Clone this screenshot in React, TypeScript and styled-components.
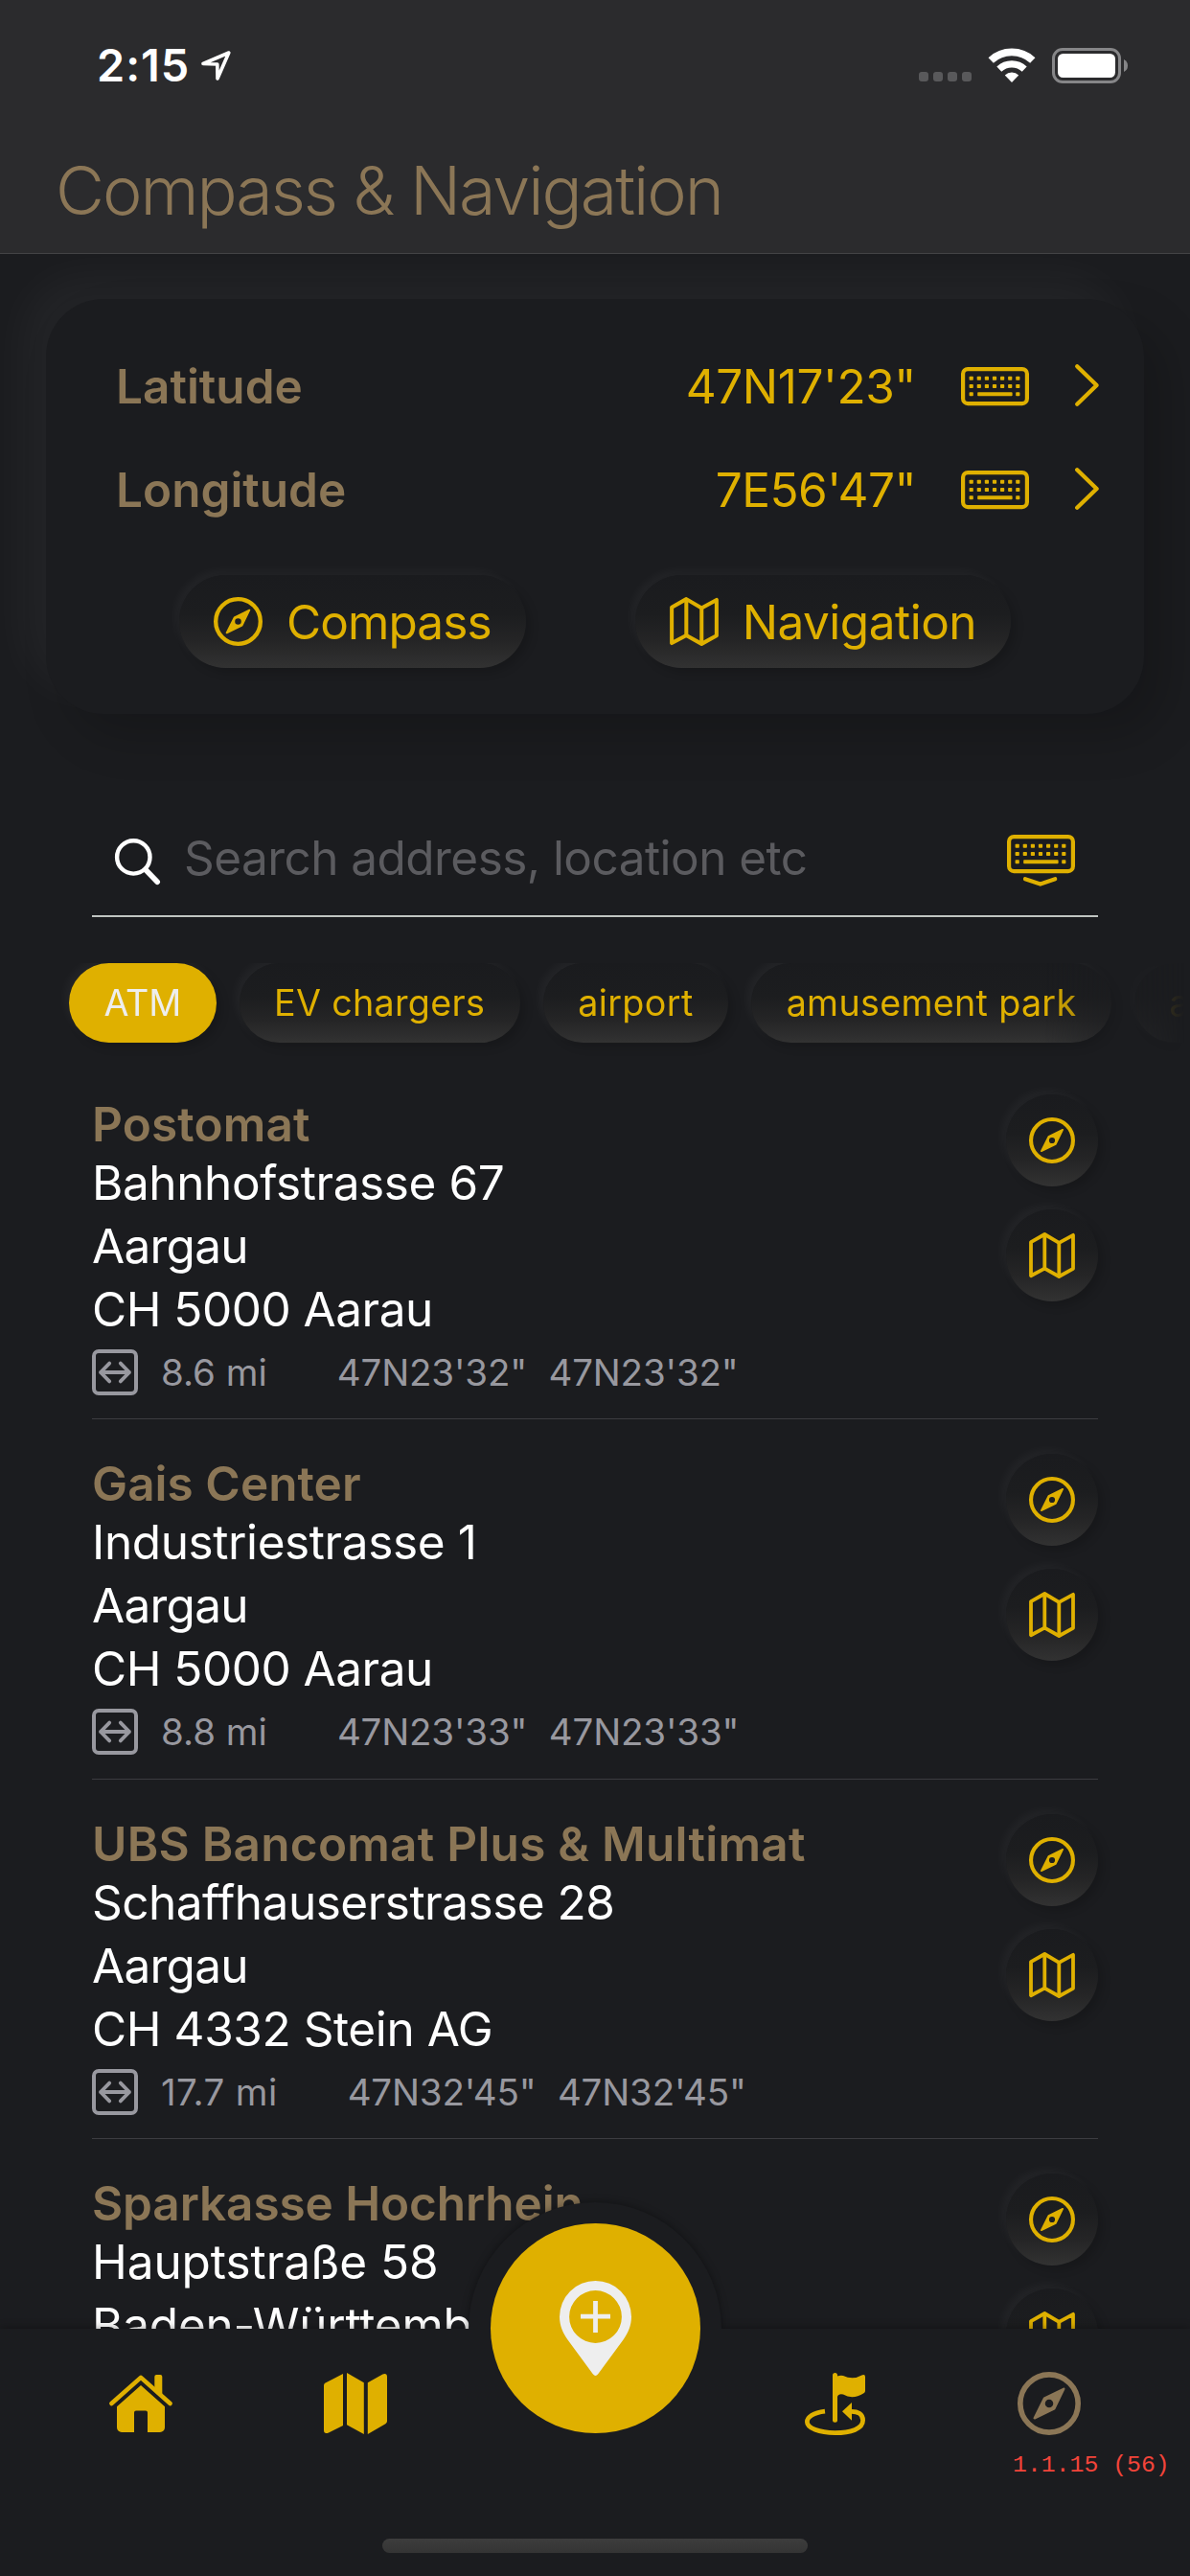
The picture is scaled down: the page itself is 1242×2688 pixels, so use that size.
import React from "react";
import styled, { createGlobalStyle, css } from "styled-components";

const color = {
  bg: "#1b1c1f",
  header: "#2b2b2d",
  gold: "#dfb000",
  bronze: "#8b7656",
  white: "#ffffff",
  muted: "#98989f",
  placeholder: "#5b5b5f",
  offWhite: "#eeeeee",
};

const GlobalStyle = createGlobalStyle`
  html, body { margin: 0; padding: 0; background: ${color.bg}; }
  * { box-sizing: border-box; }
  body { font-family: Inter, Roboto, "Liberation Sans", sans-serif; }
  svg { display: block; flex: none; overflow: visible; }
`;

const raised = css`
  background: linear-gradient(180deg, #1a1b1e 0%, #1c1d1f 42%, #252526 72%, #323232 100%);
  box-shadow: -5px -5px 10px rgba(255, 255, 255, 0.035), 5px 5px 10px rgba(0, 0, 0, 0.16);
`;

const Screen = styled.div`
  width: 1242px;
  height: 2688px;
  display: flex;
  flex-direction: column;
  overflow: hidden;
  background: ${color.bg};
`;

const Header = styled.header`
  flex: none;
  height: 265px;
  background: ${color.header};
  border-bottom: 1px solid #434345;
`;

const StatusBar = styled.div`
  display: flex;
  align-items: center;
  height: 136px;
  padding: 0 65px 0 101px;
`;

const Clock = styled.span`
  font-size: 46.8px;
  font-weight: 600;
  letter-spacing: 0.98px;
  line-height: 56px;
  color: ${color.white};
  margin-right: 12px;
`;

const StatusIcons = styled.div`
  display: flex;
  align-items: center;
  margin-left: auto;
`;

const SignalDots = styled.div`
  display: flex;
  gap: 5px;
  margin: 24px 18px 0 0;
`;

const SignalDot = styled.span`
  width: 10px;
  height: 10px;
  border-radius: 3px;
  background: #59595b;
`;

const BatteryBox = styled.span`
  margin-left: 18px;
`;

const Title = styled.h1`
  margin: 0;
  padding-left: 58px;
  font-size: 70px;
  font-weight: 310;
  letter-spacing: -2.02px;
  line-height: 126px;
  white-space: nowrap;
  color: ${color.bronze};
`;

const Main = styled.main`
  flex: 1;
  min-height: 0;
  overflow: hidden;
  display: flex;
  flex-direction: column;
`;

const Card = styled.section`
  flex: none;
  height: 433px;
  margin: 47px 48px 0;
  padding-top: 37px;
  border-radius: 60px;
  background: ${color.bg};
  box-shadow: -24px -24px 48px rgba(255, 255, 255, 0.038), 24px 24px 48px rgba(0, 0, 0, 0.18);
`;

const CoordRow = styled.div`
  display: flex;
  align-items: center;
  height: 108px;
  padding: 0 47px 0 73px;
`;

const Label = styled.span`
  font-size: 49.5px;
  font-weight: 600;
  line-height: 60px;
  color: ${color.bronze};
`;

const Value = styled.span<{ $track: number }>`
  margin: 0 47px 0 auto;
  font-size: 49.5px;
  line-height: 60px;
  letter-spacing: ${(p) => p.$track}px;
  color: ${color.gold};
`;

const ChevronBox = styled.span`
  margin: -2px 0 0 48px;
`;

const Actions = styled.div`
  display: flex;
  justify-content: center;
  gap: 114px;
  margin-top: 35px;
`;

const PillButton = styled.button<{ $track: number }>`
  ${raised}
  display: flex;
  align-items: center;
  gap: 25px;
  height: 97px;
  padding: 0 36px;
  border: 0;
  border-radius: 49px;
  font: 400 49.5px/60px Inter, sans-serif;
  letter-spacing: ${(p) => p.$track}px;
  color: ${color.gold};
`;

const SearchBar = styled.div`
  flex: none;
  display: flex;
  align-items: center;
  height: 122px;
  margin: 90px 96px 0;
  padding: 0 24px;
  border-bottom: 2px solid #bfc4c1;
`;

const Placeholder = styled.span`
  margin: 0 auto 0 25px;
  font-size: 49.5px;
  letter-spacing: -0.55px;
  line-height: 60px;
  color: ${color.placeholder};
`;

const SearchGlyph = styled.span`
  margin-top: 8px;
`;

const DismissGlyph = styled.span`
  margin-top: 6px;
`;

const Chips = styled.div`
  flex: none;
  display: flex;
  gap: 24px;
  height: 101px;
  margin-top: 48px;
  padding: 0 0 18px 72px;
  overflow: hidden;
  mask-image: linear-gradient(90deg, #000 1090px, transparent 1236px);
`;

const Chip = styled.button<{ $active?: boolean; $track: number }>`
  ${raised}
  flex: none;
  height: 83px;
  padding: 0 36.5px 1px;
  border: 0;
  border-radius: 42px;
  font: 400 37.7px/48px Inter, sans-serif;
  letter-spacing: ${(p) => p.$track}px;
  color: ${color.gold};
  ${(p) =>
    p.$active &&
    css`
      background: ${color.gold};
      color: ${color.offWhite};
    `}
`;

const List = styled.div`
  flex: none;
  padding: 0 96px;
`;

const Item = styled.article`
  display: flex;
  justify-content: space-between;
  height: 375.34px;
  padding-top: 36px;
  border-bottom: 1px solid #3c3c40;
`;

const Details = styled.div`
  padding-top: 4px;
  white-space: nowrap;
`;

const Name = styled.h2<{ $track: number }>`
  margin: 0;
  font-size: 49.5px;
  font-weight: 600;
  line-height: 55px;
  letter-spacing: ${(p) => p.$track}px;
  color: ${color.bronze};
`;

const AddressLine = styled.p<{ $track: number }>`
  margin: 0;
  font-size: 49.5px;
  line-height: 66px;
  letter-spacing: ${(p) => p.$track}px;
  color: ${color.white};
`;

const Meta = styled.div`
  display: flex;
  align-items: center;
  height: 66px;
  font-size: 38.5px;
  letter-spacing: -0.17px;
  color: ${color.muted};
`;

const Distance = styled.span<{ $track: number }>`
  margin: 0 73px 0 24px;
  letter-spacing: ${(p) => p.$track}px;
`;

const Coord = styled.span`
  margin-right: 22.5px;
`;

const ItemActions = styled.div`
  display: flex;
  flex-direction: column;
  gap: 24px;
`;

const RoundButton = styled.button`
  ${raised}
  display: grid;
  place-items: center;
  width: 96px;
  height: 96px;
  padding: 0;
  border: 0;
  border-radius: 50%;
  color: ${color.gold};
`;

const TabBar = styled.nav`
  flex: none;
  position: relative;
  height: 258px;
  background: ${color.bg};
  box-shadow: 0 0 9px rgba(0, 0, 0, 0.4);
`;

const Bump = styled.div`
  position: absolute;
  left: 489px;
  top: -132px;
  width: 264px;
  height: 133px;
  border-radius: 132px 132px 0 0;
  background: ${color.bg};
  box-shadow: 0 0 9px rgba(0, 0, 0, 0.4);
  clip-path: inset(-24px -24px 1px -24px);
`;

const AddButton = styled.button`
  position: absolute;
  left: 512px;
  top: -110px;
  display: grid;
  place-items: center;
  width: 219px;
  height: 219px;
  padding: 0;
  border: 0;
  border-radius: 50%;
  background: ${color.gold};
`;

const Tabs = styled.div`
  display: grid;
  grid-template-columns: 224px 223px 278px 223px 224px;
  height: 156px;
  padding: 0 35px;
`;

const Tab = styled.div<{ $current?: boolean }>`
  display: grid;
  place-items: center;
  color: ${(p) => (p.$current ? color.bronze : color.gold)};
`;

const Version = styled.span`
  position: absolute;
  left: 1057px;
  top: 127px;
  font: 24.8px/30px "Liberation Mono", monospace;
  color: #f2443a;
  white-space: pre;
`;

const HomeIndicator = styled.div`
  width: 444px;
  height: 15px;
  margin: 63px auto 0;
  border-radius: 8px;
  background: linear-gradient(180deg, #3d3d3d, #343434);
`;

const CompassIcon = ({ size }: { size: number }) => (
  <svg width={size} height={size} viewBox="0 0 48 48" fill="none">
    <circle cx="24" cy="24" r="21.95" stroke="currentColor" strokeWidth="4.1" />
    <path
      fillRule="evenodd"
      d="M35.1 12.9L20.4 20.1L12.9 35.1L27.8 27.9ZM24 20.9A3.1 3.1 0 1 1 24 27.1A3.1 3.1 0 1 1 24 20.9Z"
      fill="currentColor"
    />
    <path d="M35.1 12.9L20.4 20.1L12.9 35.1L27.8 27.9Z" stroke="currentColor" strokeWidth="1.8" strokeLinejoin="round" />
  </svg>
);

const MapIcon = ({ size }: { size: number }) => (
  <svg width={size} height={size} viewBox="0 0 48 48" fill="none" stroke="currentColor" strokeWidth="3.8" strokeLinejoin="round">
    <path d="M2 10.2L16.3 2L31.3 10.8L46 2.8V37.8L31.3 46L16.3 37.6L2 45.2Z" />
    <path d="M16.3 2V37.6M31.3 10.8V46" />
  </svg>
);

const keyColumns = [10.7, 18.8, 26.9, 35, 43.1, 51.2, 59.3];

const KeyboardIcon = ({ dismiss }: { dismiss?: boolean }) => (
  <svg width="71" height={dismiss ? 54 : 40} viewBox={dismiss ? "0 0 71 54" : "0 0 71 40"} fill="none">
    <rect x="2.1" y="2.1" width="66.8" height="36" rx="5" stroke={color.gold} strokeWidth="4.2" />
    {keyColumns.map((x) => (
      <React.Fragment key={x}>
        <rect x={x - 2.1} y="9.7" width="4.2" height="4" rx="0.8" fill={color.gold} />
        <rect x={x - 2.1} y="18" width="4.2" height="4" rx="0.8" fill={color.gold} />
      </React.Fragment>
    ))}
    <rect x="8.6" y="26.2" width="4.2" height="4" rx="0.8" fill={color.gold} />
    <rect x="17.2" y="26.2" width="36.4" height="4" rx="0.8" fill={color.gold} />
    <rect x="57.2" y="26.2" width="4.2" height="4" rx="0.8" fill={color.gold} />
    {dismiss && (
      <path d="M19 46.2L34.8 51.6L50.2 46.2" stroke={color.gold} strokeWidth="4.2" strokeLinecap="round" strokeLinejoin="round" />
    )}
  </svg>
);

const ChevronIcon = () => (
  <svg width="25" height="44" viewBox="0 0 25 44" fill="none">
    <path d="M2.2 2.2L22.6 22L2.2 41.8" stroke={color.gold} strokeWidth="4.3" strokeLinecap="round" strokeLinejoin="round" />
  </svg>
);

const SearchIcon = () => (
  <svg width="47" height="48" viewBox="0 0 47 48" fill="none" stroke={color.white}>
    <circle cx="19.3" cy="19.4" r="17.2" strokeWidth="4.4" />
    <path d="M32.4 33L44.2 45.2" strokeWidth="5.6" strokeLinecap="round" />
  </svg>
);

const DistanceIcon = () => (
  <svg width="48" height="48" viewBox="0 0 48 48" fill="none" stroke={color.muted} strokeWidth="4" strokeLinecap="round" strokeLinejoin="round">
    <rect x="2" y="2" width="44" height="44" rx="5" />
    <path d="M9 24H39M18.2 14.6L9 24L18.2 33.4M29.8 14.6L39 24L29.8 33.4" strokeWidth="3.8" />
  </svg>
);

const LocationArrow = () => (
  <svg width="31" height="31" viewBox="0 0 31 31" fill="none">
    <path d="M2 13.5L28.8 2L17 29L16.8 14Z" stroke={color.white} strokeWidth="3.6" strokeLinejoin="round" />
  </svg>
);

const WifiIcon = () => (
  <svg width="48" height="36" viewBox="0 0 48 36" fill="none">
    <path d="M2.2 13A32 32 0 0 1 45.8 13" stroke={color.white} strokeWidth="7.8" />
    <path d="M10.8 22.1A19.2 19.2 0 0 1 37.2 22.1" stroke={color.white} strokeWidth="7.2" />
    <path d="M24 36L16.8 28.4A10.5 10.5 0 0 1 31.2 28.4Z" fill={color.white} />
  </svg>
);

const BatteryIcon = () => (
  <svg width="79" height="37" viewBox="0 0 79 37" fill="none">
    <rect x="1.5" y="1.5" width="69" height="34" rx="9.5" stroke="#868688" strokeWidth="3" />
    <rect x="6" y="6" width="60" height="25" rx="5.5" fill={color.white} />
    <path d="M75 12Q79 14 79 18.5Q79 23 75 25Z" fill="#868688" />
  </svg>
);

const HomeIcon = () => (
  <svg width="66" height="60" viewBox="0 0 66 60" fill="currentColor">
    <path d="M2.4 30L33 2.9L63.6 30" fill="none" stroke="currentColor" strokeWidth="4.6" strokeLinecap="round" strokeLinejoin="round" />
    <path d="M47.3 14.5V2Q47.3 0 49.3 0H53.3Q55.3 0 55.3 2V21.5Z" />
    <path d="M33 11L58 33.2V55a5 5 0 0 1-5 5H40V39.5a2 2 0 0 0-2-2H28a2 2 0 0 0-2 2V60H13a5 5 0 0 1-5-5V33.2Z" />
  </svg>
);

const MapFilledIcon = () => (
  <svg width="66" height="64" viewBox="0 0 66 64" fill="currentColor">
    <path d="M20 1V55L5 62.5Q0 64.3 0 60V13Q0 11.3 1.7 10.4Z" />
    <path d="M24 0L41.8 10.3V64L24 54.2Z" />
    <path d="M45.8 10.2L61.4 1.4Q66 0 66 4V50.6Q66 52.3 64.3 53.2L45.8 64Z" />
  </svg>
);

const FlagIcon = () => (
  <svg width="63" height="65" viewBox="0 0 63 65" fill="currentColor">
    <path d="M31.5 2.5V49.3" fill="none" stroke="currentColor" strokeWidth="5" strokeLinecap="round" />
    <path d="M31.5 4.3Q36 2 40 2.9Q50 8 60 2.3Q63 1.2 63 4.2V19Q63 20.6 61.5 21.3Q50 28.4 40 22.6Q35 21.6 34 25H31.5Z" />
    <path
      d="M21 40.2C9 41.6 2.4 46 2.4 51.2C2.4 57.6 15 62.6 31.5 62.6C48 62.6 60.6 58.5 60.6 49.6C60.6 42.5 55 40.2 48 40.4"
      fill="none"
      stroke="currentColor"
      strokeWidth="4.8"
    />
    <path d="M39 40.3L49 31V49.7Z" />
  </svg>
);

const PinPlusIcon = () => (
  <svg width="75" height="99" viewBox="0 0 75 99" fill={color.offWhite}>
    <path
      fillRule="evenodd"
      d="M37.5 0A37.5 37.5 0 0 1 75 37.5C75 46.5 71.5 54.5 66.5 61.5L40.2 97.3Q37.5 100.6 34.8 97.3L8.5 61.5C3.5 54.5 0 46.5 0 37.5A37.5 37.5 0 0 1 37.5 0ZM37.5 10.1A27.4 27.4 0 1 0 37.5 64.9A27.4 27.4 0 1 0 37.5 10.1Z"
    />
    <path d="M35.1 21H39.9V34.8H53V39.4H39.9V54H35.1V39.4H22V34.8H35.1Z" />
  </svg>
);

const categories = [
  { name: "ATM", track: -0.2 },
  { name: "EV chargers", track: 0.28 },
  { name: "airport", track: 0.38 },
  { name: "amusement park", track: 0.3 },
  { name: "aquarium", track: 0.2 },
];

type Place = {
  name: string;
  nameTrack: number;
  lines: { text: string; track: number }[];
  distance: string;
  distanceTrack: number;
  coord: string;
};

const places: Place[] = [
  {
    name: "Postomat",
    nameTrack: 0.14,
    lines: [
      { text: "Bahnhofstrasse 67", track: -0.41 },
      { text: "Aargau", track: -0.72 },
      { text: "CH 5000 Aarau", track: -0.5 },
    ],
    distance: "8.6 mi",
    distanceTrack: 0,
    coord: "47N23'32\"",
  },
  {
    name: "Gais Center",
    nameTrack: 0.05,
    lines: [
      { text: "Industriestrasse 1", track: -0.4 },
      { text: "Aargau", track: -0.72 },
      { text: "CH 5000 Aarau", track: -0.5 },
    ],
    distance: "8.8 mi",
    distanceTrack: 0,
    coord: "47N23'33\"",
  },
  {
    name: "UBS Bancomat Plus & Multimat",
    nameTrack: 0.25,
    lines: [
      { text: "Schaffhauserstrasse 28", track: -0.5 },
      { text: "Aargau", track: -0.72 },
      { text: "CH 4332 Stein AG", track: -0.42 },
    ],
    distance: "17.7 mi",
    distanceTrack: 0.4,
    coord: "47N32'45\"",
  },
  {
    name: "Sparkasse Hochrhein",
    nameTrack: -0.1,
    lines: [
      { text: "Hauptstraße 58", track: -0.08 },
      { text: "Baden-Württemberg", track: -0.2 },
      { text: "DE 79761 Waldshut", track: -0.4 },
    ],
    distance: "18.3 mi",
    distanceTrack: 0.4,
    coord: "47N37'20\"",
  },
];

const PlaceItem = ({ place }: { place: Place }) => (
  <Item>
    <Details>
      <Name $track={place.nameTrack}>{place.name}</Name>
      {place.lines.map((line) => (
        <AddressLine key={line.text} $track={line.track}>
          {line.text}
        </AddressLine>
      ))}
      <Meta>
        <DistanceIcon />
        <Distance $track={place.distanceTrack}>{place.distance}</Distance>
        <Coord>{place.coord}</Coord>
        <Coord>{place.coord}</Coord>
      </Meta>
    </Details>
    <ItemActions>
      <RoundButton aria-label="Compass">
        <CompassIcon size={48} />
      </RoundButton>
      <RoundButton aria-label="Map">
        <MapIcon size={48} />
      </RoundButton>
    </ItemActions>
  </Item>
);

export default function App() {
  return (
    <>
      <GlobalStyle />
      <Screen>
        <Header>
          <StatusBar>
            <Clock>2:15</Clock>
            <LocationArrow />
            <StatusIcons>
              <SignalDots>
                <SignalDot />
                <SignalDot />
                <SignalDot />
                <SignalDot />
              </SignalDots>
              <WifiIcon />
              <BatteryBox>
                <BatteryIcon />
              </BatteryBox>
            </StatusIcons>
          </StatusBar>
          <Title>Compass &amp; Navigation</Title>
        </Header>
        <Main>
          <Card>
            <CoordRow>
              <Label>Latitude</Label>
              <Value $track={-0.42}>47N17'23"</Value>
              <KeyboardIcon />
              <ChevronBox>
                <ChevronIcon />
              </ChevronBox>
            </CoordRow>
            <CoordRow>
              <Label>Longitude</Label>
              <Value $track={-0.5}>7E56'47"</Value>
              <KeyboardIcon />
              <ChevronBox>
                <ChevronIcon />
              </ChevronBox>
            </CoordRow>
            <Actions>
              <PillButton $track={-0.9}>
                <CompassIcon size={51} />
                Compass
              </PillButton>
              <PillButton $track={-0.5}>
                <MapIcon size={51} />
                Navigation
              </PillButton>
            </Actions>
          </Card>
          <SearchBar>
            <SearchGlyph>
              <SearchIcon />
            </SearchGlyph>
            <Placeholder>Search address, location etc</Placeholder>
            <DismissGlyph>
              <KeyboardIcon dismiss />
            </DismissGlyph>
          </SearchBar>
          <Chips>
            {categories.map((c, i) => (
              <Chip key={c.name} $active={i === 0} $track={c.track}>
                {c.name}
              </Chip>
            ))}
          </Chips>
          <List>
            {places.map((p) => (
              <PlaceItem key={p.name} place={p} />
            ))}
          </List>
        </Main>
        <TabBar>
          <Bump />
          <Tabs>
            <Tab>
              <HomeIcon />
            </Tab>
            <Tab>
              <MapFilledIcon />
            </Tab>
            <Tab />
            <Tab>
              <FlagIcon />
            </Tab>
            <Tab $current>
              <CompassIcon size={66} />
            </Tab>
          </Tabs>
          <AddButton aria-label="Add place">
            <PinPlusIcon />
          </AddButton>
          <Version>1.1.15 (56)</Version>
          <HomeIndicator />
        </TabBar>
      </Screen>
    </>
  );
}
